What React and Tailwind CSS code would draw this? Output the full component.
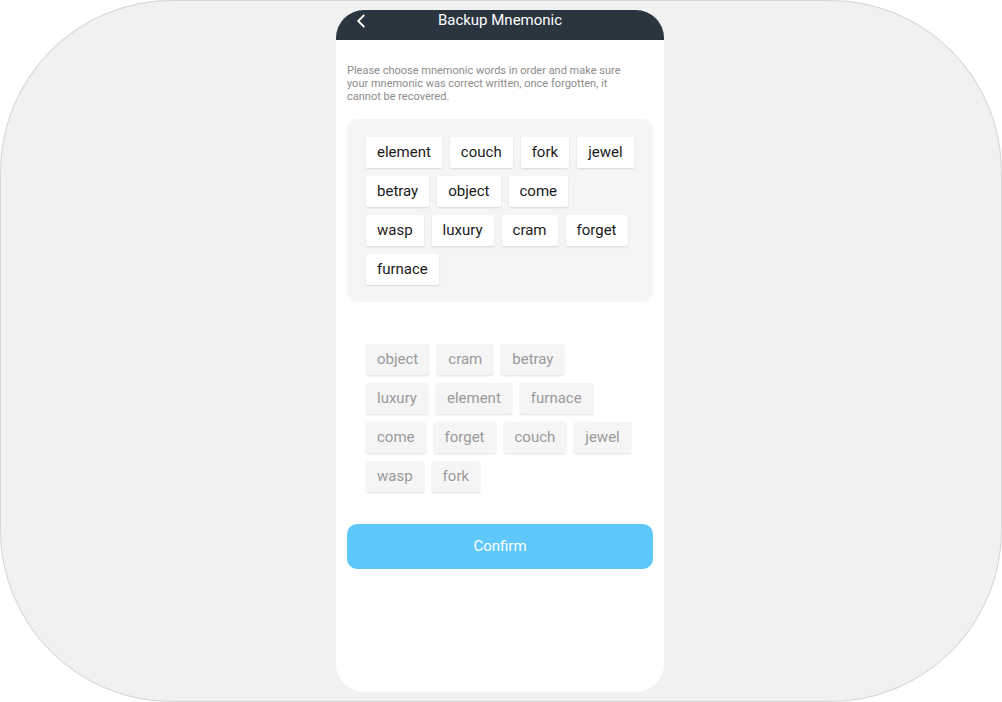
import { ChevronLeft } from 'lucide-react'

const picked = [
  ['element', 'couch', 'fork', 'jewel'],
  ['betray', 'object', 'come'],
  ['wasp', 'luxury', 'cram', 'forget'],
  ['furnace'],
]

const pool = [
  ['object', 'cram', 'betray'],
  ['luxury', 'element', 'furnace'],
  ['come', 'forget', 'couch', 'jewel'],
  ['wasp', 'fork'],
]

function Chip({ word, muted }) {
  return (
    <div
      className={`h-[31px] px-[11px] flex items-center rounded-[2px] text-[15px] shadow-[0_1px_2px_rgba(0,0,0,0.12)] ${
        muted ? 'bg-[#f5f5f6] text-[#9a9a9a]' : 'bg-white text-[#1a1a1a]'
      }`}
    >
      {word}
    </div>
  )
}

function WordRows({ rows, muted }) {
  return (
    <div className="flex flex-col gap-[8px]">
      {rows.map((row, i) => (
        <div key={i} className="flex gap-[8px]">
          {row.map((w) => (
            <Chip key={w} word={w} muted={muted} />
          ))}
        </div>
      ))}
    </div>
  )
}

export default function App() {
  return (
    <div className="w-[1002px] h-[702px] bg-white" style={{ fontFamily: 'Roboto, "Noto Sans", sans-serif' }}>
      <div className="w-full h-full rounded-[172px] bg-[#f1f1f1] ring-1 ring-inset ring-[#d6d6d6] flex justify-center pt-[10px] pr-[2px]">
        <div className="w-[328px] h-[682px] bg-white rounded-[28px] overflow-hidden flex flex-col">
          <div className="h-[30px] bg-[#2b353f] flex items-center relative shrink-0">
            <ChevronLeft className="absolute left-[14px] top-[0px] w-[22px] h-[22px] text-white" strokeWidth={2} />
            <div className="w-full text-center text-white text-[15px] leading-[20px] -mt-[10px]">Backup Mnemonic</div>
          </div>
          <div className="px-[11px] pt-[24px]">
            <p className="text-[11px] leading-[13px] text-[#8c8c8c] pr-[20px]">
              Please choose mnemonic words in order and make sure your mnemonic was correct written, once forgotten, it cannot be recovered.
            </p>
            <div className="mt-[16px] bg-[#f5f5f7] rounded-[10px] pl-[19px] pt-[18px] h-[183px]">
              <WordRows rows={picked} />
            </div>
            <div className="mt-[42px] pl-[19px] h-[180px]">
              <WordRows rows={pool} muted />
            </div>
            <button className="w-full h-[45px] rounded-[10px] bg-[#5ec8fa] text-white text-[15px]">Confirm</button>
          </div>
        </div>
      </div>
    </div>
  )
}
